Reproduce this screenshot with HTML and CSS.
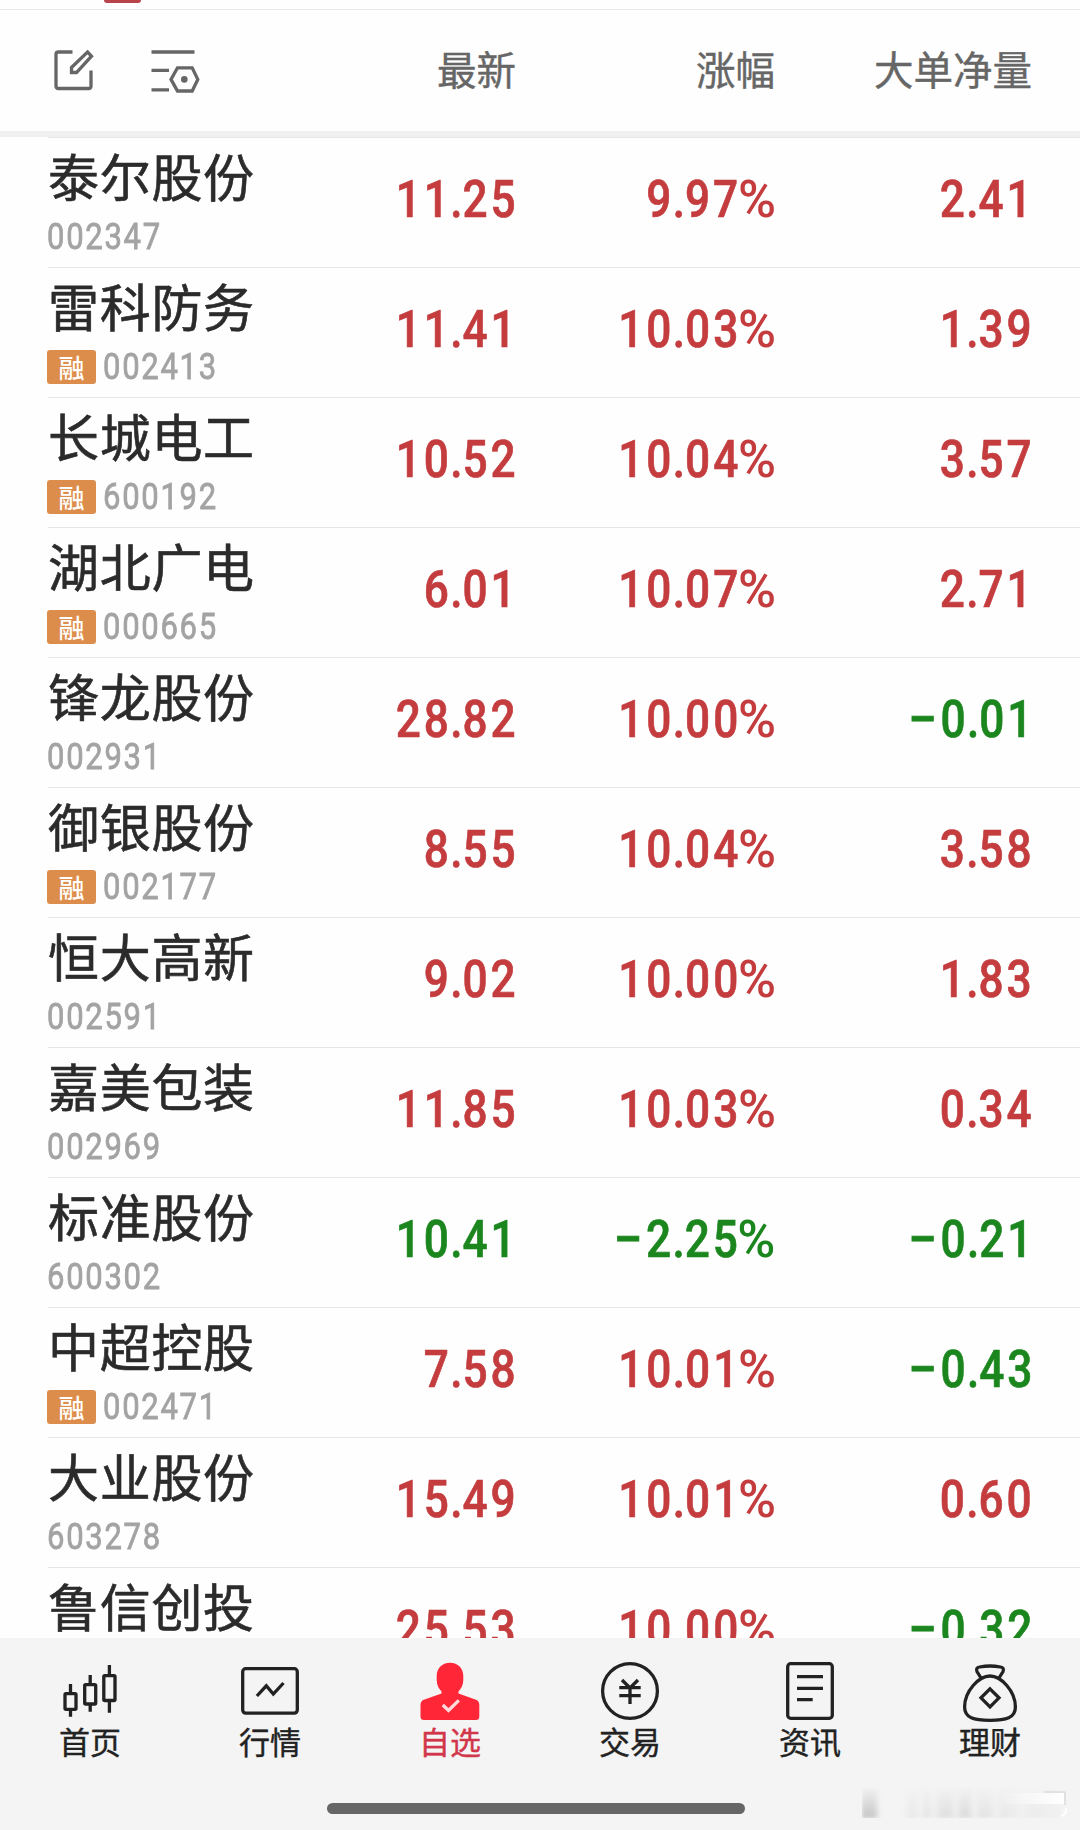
FILE: index.html
```html
<!DOCTYPE html>
<html lang="zh-CN">
<head>
    <meta charset="UTF-8">
    <meta name="viewport" content="width=device-width, initial-scale=1.0">
    <title>自选</title>
    <link rel="stylesheet" href="styles.css">
</head>
<body>
    <div class="top-strip"><span class="top-tab"></span></div>

    <header class="list-header">
        <div class="tools">
            <svg class="tool-icon" width="46" height="46" viewBox="0 0 46 46">
                <path d="M22.5 5H8.5Q6 5 6 7.5V39Q6 41.5 8.5 41.5H38.5Q41 41.5 41 39V23.5"/>
                <path d="M37.5 5L41.5 9.2L26.5 25.5H21.5V20.5Z"/>
            </svg>
            <svg class="tool-icon" width="52" height="46" viewBox="0 0 52 46">
                <path d="M1.5 5H44.5M1.5 23.3H19M1.5 42.8H19"/>
                <path d="M27.5 20.8H42.2L47.8 32.4L42.2 44H27.5L21 32.4Z"/>
                <circle class="dot" cx="34.3" cy="32.4" r="3.3"/>
            </svg>
        </div>
        <span>最新</span>
        <span>涨幅</span>
        <span>大单净量</span>
    </header>

    <main class="stock-list" id="stock-list">
        <!-- Stock rows will be displayed here -->
    </main>

    <footer>
        <nav class="tab-bar">
            <a class="tab">
                <svg class="tab-icon" viewBox="0 0 60 62">
                    <rect x="5" y="32.7" width="11" height="15.6" rx="1"/>
                    <rect x="24.7" y="23.7" width="11" height="19.3" rx="1"/>
                    <rect x="43.8" y="14.7" width="11.2" height="24.8" rx="1"/>
                    <path d="M10.5 23V32M10.5 49V55.7M30.2 14V23M30.2 43V50.7M49.4 4V14M49.4 40V51.7"/>
                </svg>
                <span>首页</span>
            </a>
            <a class="tab">
                <svg class="tab-icon" viewBox="0 0 60 62">
                    <rect x="2.7" y="7.7" width="54.6" height="44.4" rx="3"/>
                    <path d="M16.9 35L26.3 24.8L33.3 33L43.5 22"/>
                </svg>
                <span>行情</span>
            </a>
            <a class="tab active">
                <svg class="tab-icon" viewBox="0 0 60 62">
                    <path class="solid" d="M30 1.8C38 1.8 43.3 7.5 43.3 15V19C43.3 24 41 28 38.5 30.5V32.5L56 38.8Q59.3 40.2 59.3 44V55.5Q59.3 59 55.8 59H4Q.5 59 .5 55.5V44Q.5 40.2 3.8 38.8L21.5 32.5V30.5C19 28 16.7 24 16.7 19V15C16.7 7.5 22 1.8 30 1.8Z"/>
                    <path class="check" d="M22.8 44L28.5 49.5L38.8 39.3"/>
                </svg>
                <span>自选</span>
            </a>
            <a class="tab">
                <svg class="tab-icon" viewBox="0 0 60 62">
                    <circle cx="30" cy="30" r="27.4"/>
                    <path d="M22 19L30 27L38 19M30 27V43M19.3 26.7H40.7M19.3 34.7H40.7"/>
                </svg>
                <span>交易</span>
            </a>
            <a class="tab">
                <svg class="tab-icon" viewBox="0 0 60 62">
                    <rect x="7.7" y="2.7" width="44.6" height="54.6" rx="3"/>
                    <path d="M17 15.7H43M17 27.3H43M17 38.7H32.7"/>
                </svg>
                <span>资讯</span>
            </a>
            <a class="tab">
                <svg class="tab-icon" viewBox="0 0 60 62">
                    <path d="M30 15C41 15 55.4 30 55.4 46C55.4 57 46 59.3 30 59.3S4.6 57 4.6 46C4.6 30 19 15 30 15Z"/>
                    <path d="M21 17L17 10.5C16 7.5 17 6.5 19.5 6Q30 4 40.5 6C43 6.5 44 7.5 43 10.5L39 17"/>
                    <path d="M30 27.8L39 36.8L30 45.8L21 36.8Z"/>
                </svg>
                <span>理财</span>
            </a>
        </nav>
        <div class="home-indicator"></div>
        <div class="smudge"></div>
        <svg class="smudge-corner" width="70" height="30" viewBox="0 0 70 30">
            <defs>
                <linearGradient id="fade">
                    <stop offset="0" stop-color="#fff" stop-opacity="0"/>
                    <stop offset="1" stop-color="#fff"/>
                </linearGradient>
            </defs>
            <rect x="0" y="3" width="64" height="11" fill="url(#fade)"/>
            <path d="M44 2H65V15" stroke="#d0d0d0"/>
            <path d="M66 18Q67 25 61 26" stroke="#fff" stroke-width="2"/>
        </svg>
    </footer>

    <script>
        const stocks = [
            { name: "泰尔股份", code: "002347", margin: false, price: "11.25", change: "9.97%", net: "2.41" },
            { name: "雷科防务", code: "002413", margin: true, price: "11.41", change: "10.03%", net: "1.39" },
            { name: "长城电工", code: "600192", margin: true, price: "10.52", change: "10.04%", net: "3.57" },
            { name: "湖北广电", code: "000665", margin: true, price: "6.01", change: "10.07%", net: "2.71" },
            { name: "锋龙股份", code: "002931", margin: false, price: "28.82", change: "10.00%", net: "−0.01" },
            { name: "御银股份", code: "002177", margin: true, price: "8.55", change: "10.04%", net: "3.58" },
            { name: "恒大高新", code: "002591", margin: false, price: "9.02", change: "10.00%", net: "1.83" },
            { name: "嘉美包装", code: "002969", margin: false, price: "11.85", change: "10.03%", net: "0.34" },
            { name: "标准股份", code: "600302", margin: false, price: "10.41", change: "−2.25%", net: "−0.21" },
            { name: "中超控股", code: "002471", margin: true, price: "7.58", change: "10.01%", net: "−0.43" },
            { name: "大业股份", code: "603278", margin: false, price: "15.49", change: "10.01%", net: "0.60" },
            { name: "鲁信创投", code: "", margin: false, price: "25.53", change: "10.00%", net: "−0.32" }
        ];

        // Red for a rise, green for a fall
        function trend(value) {
            return value.startsWith('−') ? 'down' : 'up';
        }

        function figure(value, className) {
            const text = value
                .replace('.', '<i class="point">.</i>')
                .replace('−', '<i class="minus">−</i>')
                .replace('%', '<i class="percent">%</i>');
            return `<div class="figure ${className}"><span>${text}</span></div>`;
        }

        function displayStocks() {
            const stockList = document.getElementById('stock-list');
            stocks.forEach(stock => {
                const row = document.createElement('div');
                row.classList.add('stock-row');
                row.innerHTML = `
                    <div class="stock">
                        <div class="stock-name">${stock.name}</div>
                        <div class="stock-meta">
                            ${stock.margin ? '<span class="badge">融</span>' : ''}
                            <span class="code">${stock.code}</span>
                        </div>
                    </div>
                    ${figure(stock.price, trend(stock.change))}
                    ${figure(stock.change, trend(stock.change))}
                    ${figure(stock.net, trend(stock.net))}
                `;
                stockList.appendChild(row);
            });
        }

        displayStocks();
    </script>
</body>
</html>
```
FILE: styles.css
```css
* {
    box-sizing: border-box;
}

body {
    margin: 0;
    height: 1830px;
    display: flex;
    flex-direction: column;
    overflow: hidden;
    background-color: #fefefe;
    color: #2b2b2b;
    font-family: "Noto Sans CJK SC", sans-serif;
}

.top-strip {
    height: 10px;
    flex: none;
    padding-left: 104px;
    border-bottom: 1px solid #e8e8e8;
}

.top-tab {
    display: block;
    width: 37px;
    height: 3px;
    background-color: #b8434b;
    border-radius: 0 0 4px 4px;
}

.list-header,
.stock-row {
    display: grid;
    grid-template-columns: 247px 220px 259px 257px;
}

.list-header {
    height: 127px;
    flex: none;
    padding: 0 0 6px 49px;
    align-items: center;
    border-bottom: 6px solid #f0f0f0;
    color: #666;
    font-size: 39.5px;
    line-height: 58px;
    text-align: right;
    -webkit-text-stroke: 0.4px;
}

.tools {
    display: flex;
    gap: 54px;
    padding: 4px 0 0 1px;
}

.tool-icon {
    fill: none;
    stroke: #666;
    stroke-width: 3.3;
}

.tool-icon .dot {
    fill: #666;
    stroke: none;
}

.stock-list {
    flex: none;
    height: 1501px;
    overflow: hidden;
    padding-left: 48px;
}

.stock-row {
    height: 130px;
    border-top: 1px solid #e6e6e6;
}

.stock-name {
    height: 77px;
    font-size: 51px;
    line-height: 74px;
    letter-spacing: 0.7px;
    white-space: nowrap;
    -webkit-text-stroke: 0.6px;
}

.stock-meta {
    display: flex;
    align-items: center;
    height: 44px;
    margin-left: -1px;
}

.badge {
    width: 49px;
    height: 34px;
    margin-right: 7px;
    border-radius: 3px;
    background-color: #dd8d4b;
    color: #fff;
    font-size: 26px;
    font-weight: 500;
    line-height: 33px;
    text-align: center;
}

.code {
    color: #a3a3a3;
    font-family: Roboto, sans-serif;
    font-size: 36.5px;
    line-height: 44px;
    letter-spacing: 2px;
    transform: scaleX(0.85);
    transform-origin: left;
    -webkit-text-stroke: 0.8px;
}

.figure {
    font-family: Roboto, sans-serif;
    font-size: 52px;
    font-weight: 500;
    line-height: 123px;
    text-align: right;
    white-space: nowrap;
    -webkit-text-stroke: 0.7px;
}

.figure span {
    display: inline-block;
    letter-spacing: 3.5px;
    margin-right: -4px;
    transform: scaleX(0.85);
    transform-origin: right;
}

.figure i {
    font-style: normal;
}

.point {
    letter-spacing: 0;
    margin-left: -2px;
}

.minus,
.percent {
    display: inline-block;
    transform: scaleX(1.17);
    transform-origin: right;
}

.percent {
    margin: 0 -1px 0 3px;
    -webkit-text-stroke: 0;
}

.up {
    color: #c43c3e;
}

.down {
    color: #1c861e;
}

footer {
    position: relative;
    flex: 1;
    background-color: #f4f4f4;
}

.tab-bar {
    display: grid;
    grid-template-columns: repeat(6, 1fr);
    padding-top: 23px;
}

.tab {
    display: flex;
    flex-direction: column;
    align-items: center;
    color: #222;
    font-size: 31px;
    line-height: 36px;
    -webkit-text-stroke: 0.4px;
}

.tab.active {
    color: #d2364a;
}

.tab-icon {
    width: 60px;
    height: 62px;
    fill: none;
    stroke: #222;
    stroke-width: 3.3;
}

.tab-icon .solid {
    fill: #ff2737;
    stroke: none;
}

.tab-icon .check {
    stroke: #ffd9dc;
}

.home-indicator {
    width: 418px;
    height: 11px;
    margin: 44px 0 0 327px;
    border-radius: 6px;
    background-color: #666;
}

.smudge {
    position: absolute;
    right: 18px;
    bottom: 12px;
    width: 200px;
    height: 32px;
    background: linear-gradient(90deg, #c4c4c4 0 12px, transparent 18px 42px, #e8e8e8 48px 52px, #f2f2f2 58px, #e2e2e2 64px, #f0f0f0 72px, #dedede 80px 88px, #eee 94px, #dadada 100px 106px, #f0f0f0 112px, #e2e2e2 120px 126px, #f0f0f0 134px, #e6e6e6 142px, #f0f0f0 160px, #eaeaea 170px, #f0f0f0 200px);
    -webkit-mask-image: linear-gradient(transparent, #000);
    mask-image: linear-gradient(transparent, #000);
    filter: blur(2px);
}

.smudge-corner {
    position: absolute;
    right: 10px;
    bottom: 10px;
    fill: none;
}
```
